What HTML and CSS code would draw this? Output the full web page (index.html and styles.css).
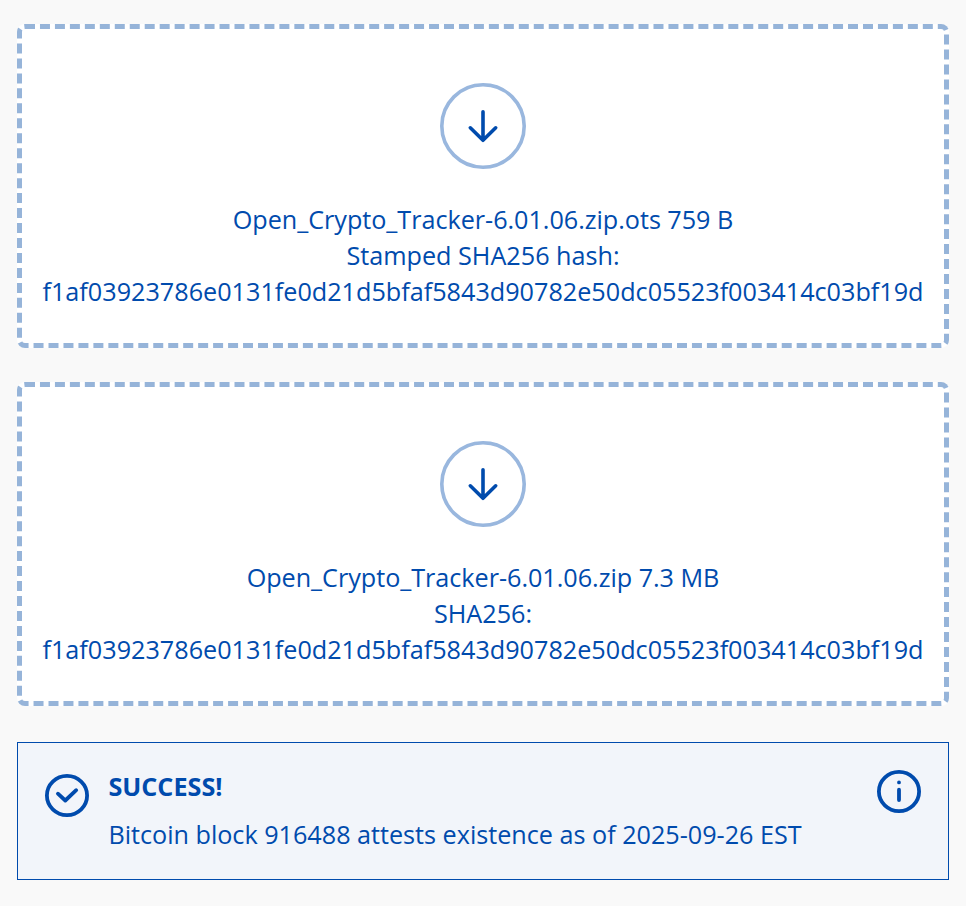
FILE: index.html
```html
<!DOCTYPE html>
<html lang="en">
<head>
<meta charset="utf-8">
<title>OpenTimestamps</title>
<link rel="stylesheet" href="styles.css">
</head>
<body>
<main class="page">
  <section class="drop">
    <svg class="drop-icon" viewBox="0 0 86 86"><circle class="ring" cx="43" cy="43" r="41.2"/><path class="arrow" d="M43 28.8v28M30.3 44.8L43 57.3L55.7 44.8"/></svg>
    <p class="file">Open_Crypto_Tracker-6.01.06.zip.ots 759 B</p>
    <p>Stamped SHA256 hash:</p>
    <p>f1af03923786e0131fe0d21d5bfaf5843d90782e50dc05523f003414c03bf19d</p>
  </section>
  <section class="drop">
    <svg class="drop-icon" viewBox="0 0 86 86"><circle class="ring" cx="43" cy="43" r="41.2"/><path class="arrow" d="M43 28.8v28M30.3 44.8L43 57.3L55.7 44.8"/></svg>
    <p class="file">Open_Crypto_Tracker-6.01.06.zip 7.3 MB</p>
    <p>SHA256:</p>
    <p>f1af03923786e0131fe0d21d5bfaf5843d90782e50dc05523f003414c03bf19d</p>
  </section>
  <section class="status">
    <svg class="status-icon check" viewBox="0 0 44 44"><ellipse cx="22" cy="22.5" rx="20.1" ry="19.6"/><path d="M12.9 20.7L20.3 27.5L31.2 17.2"/></svg>
    <div class="status-text">
      <h2>SUCCESS!</h2>
      <p>Bitcoin block 916488 attests existence as of 2025-09-26 EST</p>
    </div>
    <svg class="status-icon info" viewBox="0 0 44 44"><ellipse cx="22" cy="22.5" rx="20.1" ry="19.6"/><path d="M22 13.4v0.01M22 20.7v10.4"/></svg>
  </section>
</main>
</body>
</html>
```
FILE: styles.css
```css
* { box-sizing: border-box; }
body {
  margin: 0;
  background: #f9f9f9;
  color: #004bad;
  font: 25.2px/36px "Open Sans", sans-serif;
}
p, h2 { margin: 0; }
.page {
  width: 932px;
  margin-left: 17px;
  padding-top: 24px;
}
.drop {
  height: 324px;
  margin-bottom: 34px;
  padding-top: 54px;
  border: 5px dashed #96b4d9;
  border-radius: 8px;
  background: #fff;
  text-align: center;
  white-space: nowrap;
}
.drop-icon {
  display: block;
  width: 86px;
  height: 86px;
  margin: 0 auto 32px;
  fill: none;
}
.file { letter-spacing: -0.03px; }
.ring { stroke: #99b7de; stroke-width: 3.6; }
.arrow { stroke: #004bad; stroke-width: 3.6; stroke-linecap: round; stroke-linejoin: round; }
.status {
  display: flex;
  align-items: flex-start;
  height: 138px;
  margin-top: 36px;
  padding: 26px 27px;
  border: 1px solid #004bad;
  background: #f2f5fa;
}
.status-text { flex: 1; margin: -1px 0 0 19.4px; white-space: nowrap; }
.status-text h2 { font-size: 25.2px; line-height: 36px; font-weight: 700; margin-bottom: 12px; }
.status-text p { letter-spacing: -0.01px; }
.status-icon { width: 44px; height: 44px; fill: none; stroke: #004bad; stroke-width: 3.8; stroke-linecap: round; stroke-linejoin: round; }
.check { margin-top: 4px; }
```
